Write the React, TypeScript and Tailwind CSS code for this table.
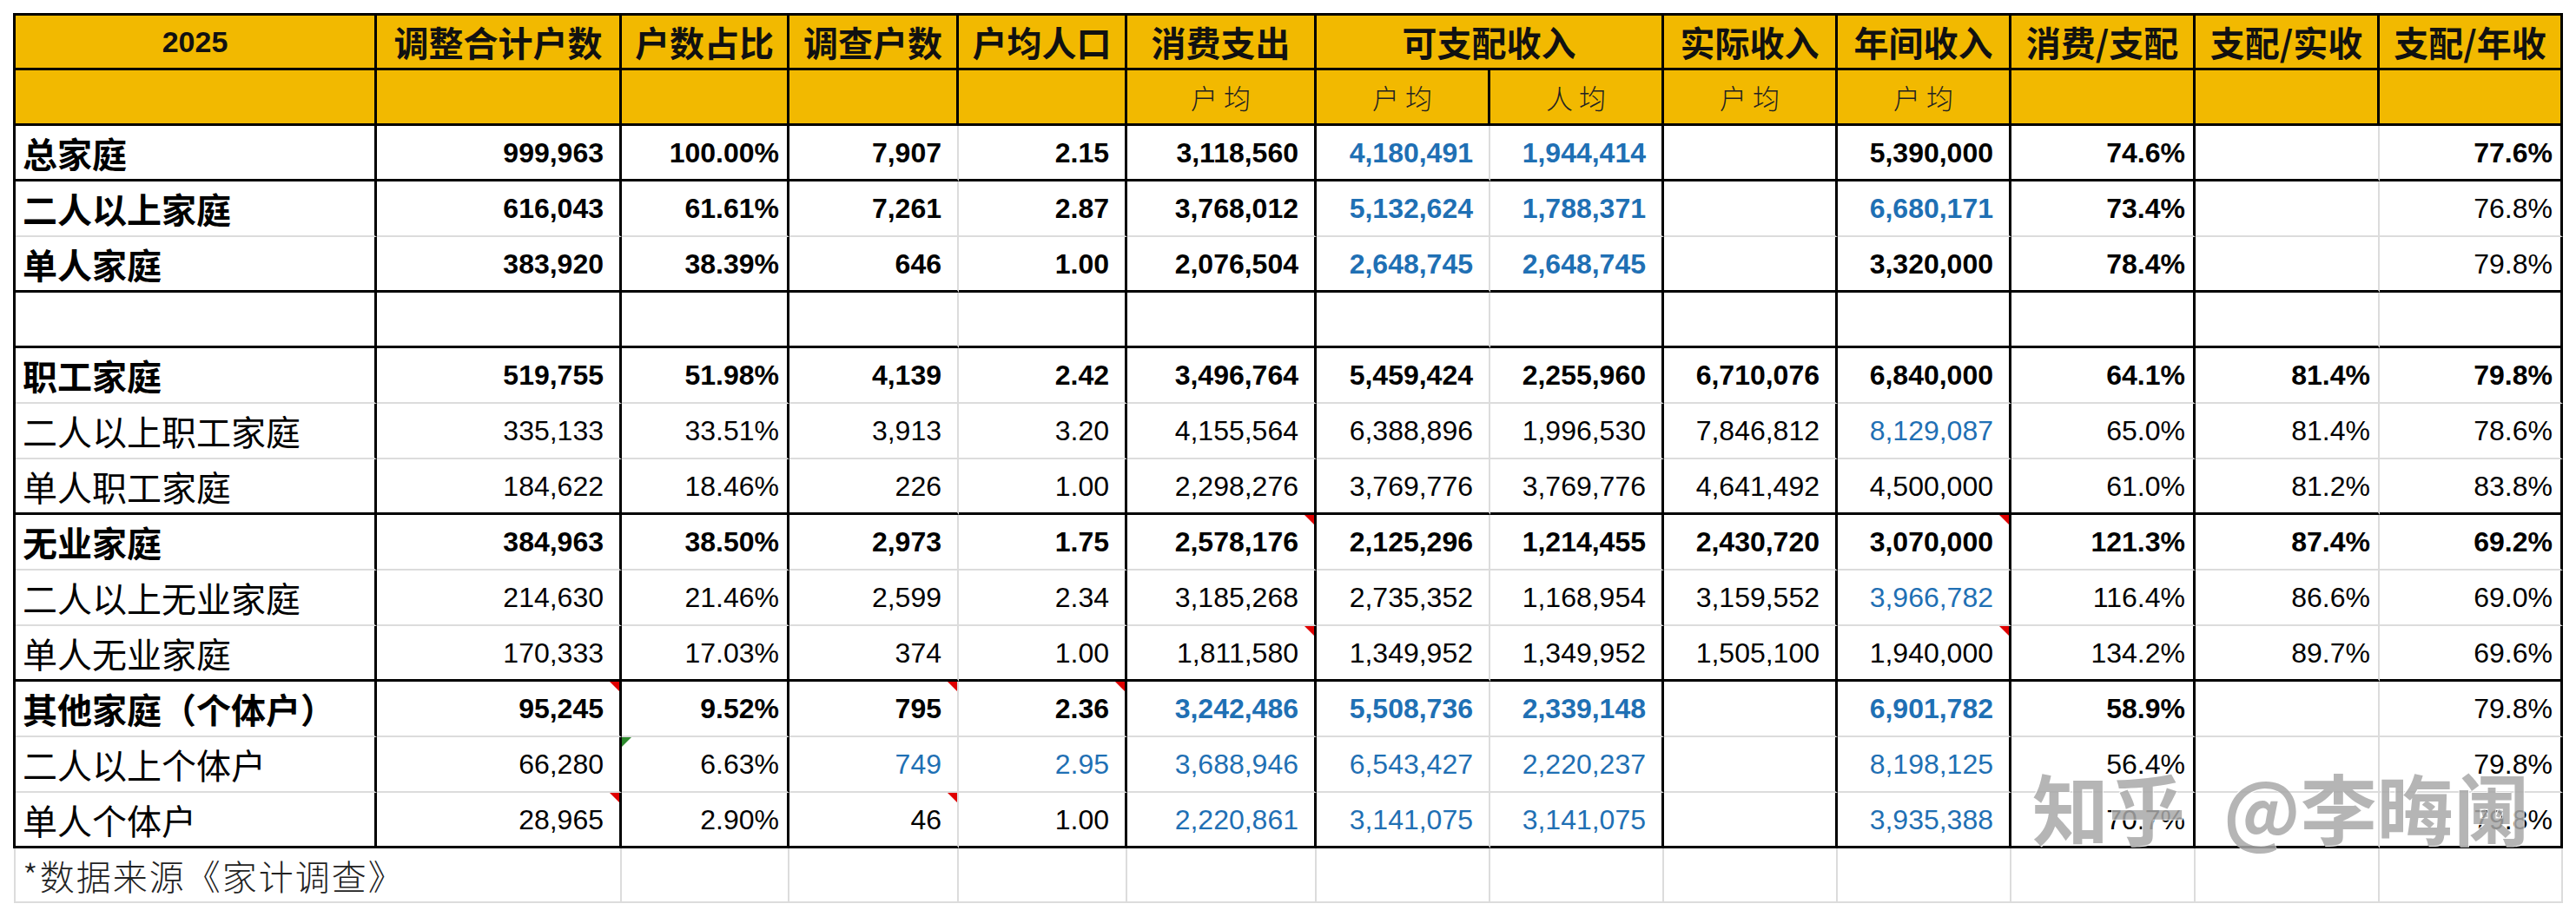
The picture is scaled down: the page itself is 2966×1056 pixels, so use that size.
import React from "react";

const GRID =
  "grid grid-cols-[416px_282px_193px_195px_194px_218px_200px_200px_200px_200px_212px_212px_211px]";
const NUM = "font-['Liberation_Sans','Noto_Sans_CJK_SC',sans-serif]";
const CJK = "font-['Noto_Sans_CJK_SC','Noto_Sans',sans-serif]";

// columns whose right-hand line is a light gridline in the body
const GRAY_RIGHT = [3, 6, 11];

type Row = {
  label: string;
  bold?: boolean;
  bottom: "black" | "gray";
  cells: string[];
  blue?: number[];
  thin?: number[];
  red?: number[];
  green?: number[];
};

const rows: Row[] = [
  {
    label: "总家庭",
    bold: true,
    bottom: "black",
    cells: ["999,963", "100.00%", "7,907", "2.15", "3,118,560", "4,180,491", "1,944,414", "", "5,390,000", "74.6%", "", "77.6%"],
    blue: [6, 7],
  },
  {
    label: "二人以上家庭",
    bold: true,
    bottom: "gray",
    cells: ["616,043", "61.61%", "7,261", "2.87", "3,768,012", "5,132,624", "1,788,371", "", "6,680,171", "73.4%", "", "76.8%"],
    blue: [6, 7, 9],
    thin: [12],
  },
  {
    label: "单人家庭",
    bold: true,
    bottom: "black",
    cells: ["383,920", "38.39%", "646", "1.00", "2,076,504", "2,648,745", "2,648,745", "", "3,320,000", "78.4%", "", "79.8%"],
    blue: [6, 7],
    thin: [12],
  },
  { label: "", bottom: "black", cells: ["", "", "", "", "", "", "", "", "", "", "", ""] },
  {
    label: "职工家庭",
    bold: true,
    bottom: "gray",
    cells: ["519,755", "51.98%", "4,139", "2.42", "3,496,764", "5,459,424", "2,255,960", "6,710,076", "6,840,000", "64.1%", "81.4%", "79.8%"],
  },
  {
    label: "二人以上职工家庭",
    bottom: "gray",
    cells: ["335,133", "33.51%", "3,913", "3.20", "4,155,564", "6,388,896", "1,996,530", "7,846,812", "8,129,087", "65.0%", "81.4%", "78.6%"],
    blue: [9],
  },
  {
    label: "单人职工家庭",
    bottom: "black",
    cells: ["184,622", "18.46%", "226", "1.00", "2,298,276", "3,769,776", "3,769,776", "4,641,492", "4,500,000", "61.0%", "81.2%", "83.8%"],
  },
  {
    label: "无业家庭",
    bold: true,
    bottom: "gray",
    cells: ["384,963", "38.50%", "2,973", "1.75", "2,578,176", "2,125,296", "1,214,455", "2,430,720", "3,070,000", "121.3%", "87.4%", "69.2%"],
    red: [5, 9],
  },
  {
    label: "二人以上无业家庭",
    bottom: "gray",
    cells: ["214,630", "21.46%", "2,599", "2.34", "3,185,268", "2,735,352", "1,168,954", "3,159,552", "3,966,782", "116.4%", "86.6%", "69.0%"],
    blue: [9],
  },
  {
    label: "单人无业家庭",
    bottom: "black",
    cells: ["170,333", "17.03%", "374", "1.00", "1,811,580", "1,349,952", "1,349,952", "1,505,100", "1,940,000", "134.2%", "89.7%", "69.6%"],
    red: [5, 9],
  },
  {
    label: "其他家庭（个体户）",
    bold: true,
    bottom: "gray",
    cells: ["95,245", "9.52%", "795", "2.36", "3,242,486", "5,508,736", "2,339,148", "", "6,901,782", "58.9%", "", "79.8%"],
    blue: [5, 6, 7, 9],
    thin: [12],
    red: [1, 3, 4],
  },
  {
    label: "二人以上个体户",
    bottom: "gray",
    cells: ["66,280", "6.63%", "749", "2.95", "3,688,946", "6,543,427", "2,220,237", "", "8,198,125", "56.4%", "", "79.8%"],
    blue: [3, 4, 5, 6, 7, 9],
    green: [2],
  },
  {
    label: "单人个体户",
    bottom: "black",
    cells: ["28,965", "2.90%", "46", "1.00", "2,220,861", "3,141,075", "3,141,075", "", "3,935,388", "70.7%", "", "79.8%"],
    blue: [5, 6, 7, 9],
    red: [1, 3],
  },
];

const headers = ["调整合计户数", "户数占比", "调查户数", "户均人口", "消费支出"];
const headersTail = ["实际收入", "年间收入", "消费/支配", "支配/实收", "支配/年收"];
const subHeads = ["", "", "", "", "户 均", "户 均", "人 均", "户 均", "户 均", "", "", ""];

function HeadCell({ children, span }: { children?: React.ReactNode; span?: boolean }) {
  return (
    <div
      className={`${span ? "col-span-2" : ""} flex h-[63px] items-center justify-center border-r-[3px] border-b-[3px] border-black bg-[#f2b900] ${CJK} text-[40px] font-bold leading-none text-[#111]`}
    >
      {children}
    </div>
  );
}

function SubCell({ children }: { children?: React.ReactNode }) {
  return (
    <div
      className={`flex h-[64px] items-center justify-center border-r-[3px] border-b-[3px] border-black bg-[#f2b900] ${CJK} text-[31px] font-light leading-none text-[#222]`}
    >
      {children}
    </div>
  );
}

function DataRow({ row }: { row: Row }) {
  const bottomCls =
    row.bottom === "black" ? "border-b-[3px] border-b-black" : "border-b-2 border-b-[#dcdcdc]";
  return (
    <>
      <div
        className={`flex h-[64px] items-center border-r-[3px] border-r-black pl-2 ${bottomCls} ${CJK} text-[40px] leading-none text-black ${row.bold ? "font-bold" : "font-normal"}`}
      >
        {row.label}
      </div>
      {row.cells.map((v, i) => {
        const col = i + 1;
        const rightCls = GRAY_RIGHT.includes(col)
          ? "border-r-2 border-r-[#dcdcdc]"
          : "border-r-[3px] border-r-black";
        const isBlue = row.blue?.includes(col);
        const isBold = row.bold && !row.thin?.includes(col);
        const pad = v.endsWith("%") ? "pr-[9px]" : "pr-[18px]";
        return (
          <div
            key={col}
            className={`relative flex h-[64px] items-center justify-end ${pad} ${rightCls} ${bottomCls} ${NUM} text-[32px] leading-none ${isBlue ? "text-[#1f70b4]" : "text-black"} ${isBold ? "font-bold" : "font-normal"}`}
          >
            {v}
            {row.red?.includes(col) && (
              <span className="absolute right-0 top-0 h-[11px] w-[11px] bg-[#e00000] [clip-path:polygon(0_0,100%_0,100%_100%)]" />
            )}
            {row.green?.includes(col) && (
              <span className="absolute left-0 top-0 h-[11px] w-[11px] bg-[#2d8a2d] [clip-path:polygon(0_0,100%_0,0_100%)]" />
            )}
          </div>
        );
      })}
    </>
  );
}

export default function App() {
  return (
    <div className="relative h-[1056px] w-[2966px] overflow-hidden bg-white pt-[15px]">
      <div className="ml-[15px] w-fit border-l-[3px] border-t-[3px] border-black">
        <div className={GRID}>
          <HeadCell>
            <span className={`${NUM} text-[34px] font-bold`}>2025</span>
          </HeadCell>
          {headers.map((h) => (
            <HeadCell key={h}>{h}</HeadCell>
          ))}
          <HeadCell span>可支配收入</HeadCell>
          {headersTail.map((h) => (
            <HeadCell key={h}>{h}</HeadCell>
          ))}

          <SubCell />
          {subHeads.map((s, i) => (
            <SubCell key={i}>{s}</SubCell>
          ))}

          {rows.map((r, i) => (
            <DataRow key={i} row={r} />
          ))}
        </div>
      </div>

      {/* footnote line, plain gridlines */}
      <div className="ml-[16px] w-fit border-l-2 border-l-[#dcdcdc]">
        <div className={GRID}>
          <div
            className={`col-span-2 flex h-[63px] items-center border-r-2 border-b-2 border-[#dcdcdc] pl-2 ${CJK} text-[40px] font-light leading-none tracking-[2px] text-[#222]`}
          >
            *数据来源《家计调查》
          </div>
          {Array.from({ length: 11 }).map((_, i) => (
            <div key={i} className="h-[63px] border-r-2 border-b-2 border-[#dcdcdc]" />
          ))}
        </div>
      </div>

      {/* watermark */}
      <div
        className={`pointer-events-none absolute left-[2340px] top-[884px] flex items-center ${CJK} text-[88px] font-bold leading-none text-[#a9a9a9] opacity-85 [text-shadow:1px_1px_0_#fff,-1px_-1px_0_#fff]`}
      >
        <span>知乎</span>
        <span className="ml-[44px]">@李晦阑</span>
      </div>
    </div>
  );
}
